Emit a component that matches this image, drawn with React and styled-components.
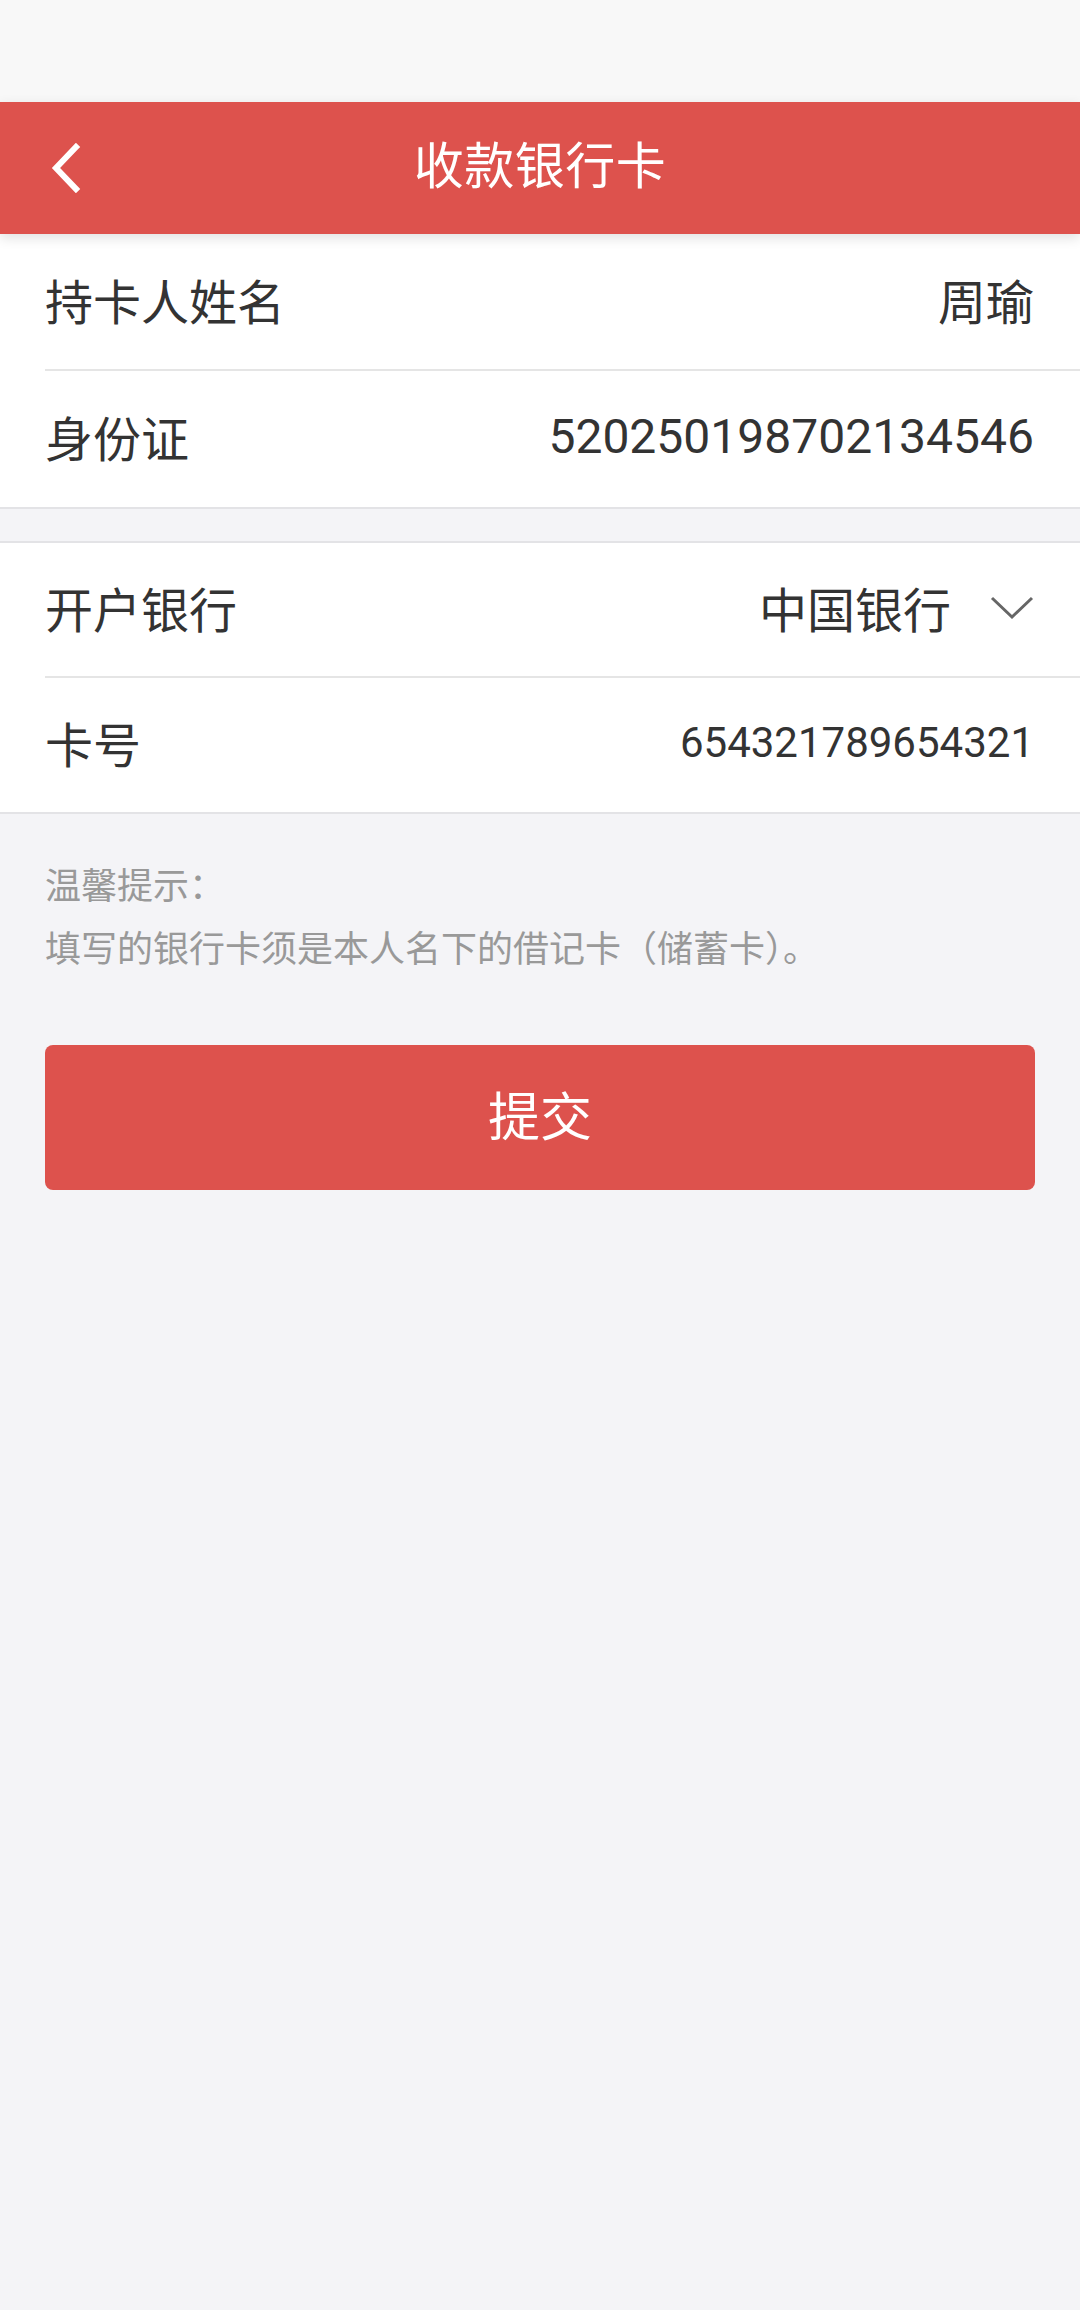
import React from 'react';
import styled, { createGlobalStyle } from 'styled-components';

const GlobalStyle = createGlobalStyle`
  html, body {
    margin: 0;
    padding: 0;
    background: #f4f4f7;
  }
  body {
    font-family: Roboto, "Noto Sans CJK SC", "Noto Sans", sans-serif;
    color: #333;
  }
  * {
    box-sizing: border-box;
  }
`;

const infoRows = [
  { label: '持卡人姓名', value: '周瑜', height: 135 },
  { label: '身份证', value: '520250198702134546', height: 136 },
];

const App = () => {
  return (
    <Page>
      <GlobalStyle />
      <StatusBar />
      <Header>
        <BackButton aria-label="返回">
          <svg width="40" height="50" viewBox="0 0 40 50" fill="none">
            <path d="M29 4 L9 25 L29 46" stroke="#fff" strokeWidth="6" strokeLinecap="square" />
          </svg>
        </BackButton>
        <Title>收款银行卡</Title>
        <span />
      </Header>

      <Card>
        {infoRows.map((r) => (
          <Row key={r.label} $height={r.height}>
            <Label>{r.label}</Label>
            <Value>{r.value}</Value>
          </Row>
        ))}
      </Card>

      <Card $top>
        <Row $height={133}>
          <Label>开户银行</Label>
          <Select>
            <Value>中国银行</Value>
            <svg width="44" height="26" viewBox="0 0 44 26" fill="none">
              <path d="M2 3 L22 22 L42 3" stroke="#666" strokeWidth="3" />
            </svg>
          </Select>
        </Row>
        <Row $height={134}>
          <Label>卡号</Label>
          <Value $small>654321789654321</Value>
        </Row>
      </Card>

      <Tips>
        <p>温馨提示：</p>
        <p>填写的银行卡须是本人名下的借记卡（储蓄卡）。</p>
      </Tips>

      <SubmitButton>提交</SubmitButton>
    </Page>
  );
};

export default App;

const Page = styled.div`
  min-height: 2310px;
  background: #f4f4f7;
`;

const StatusBar = styled.div`
  height: 102px;
  background: #f8f8f8;
`;

const Header = styled.header`
  position: relative;
  z-index: 2;
  height: 132px;
  background: #dd524d;
  display: grid;
  grid-template-columns: 1fr auto 1fr;
  align-items: center;
  box-shadow: 0 4px 12px rgba(0, 0, 0, 0.12);
`;

const BackButton = styled.button`
  justify-self: start;
  margin-left: 47px;
  padding: 0;
  border: 0;
  background: none;
  display: flex;
  align-items: center;
`;

const Title = styled.h1`
  margin: 0 0 12px;
  color: #fff;
  font-size: 50px;
  font-weight: 400;
  letter-spacing: 0.5px;
`;

const Card = styled.section`
  background: #fff;
  border-top: ${(p) => (p.$top ? '2px solid #e3e3e6' : 'none')};
  border-bottom: 2px solid #e3e3e6;
  margin-top: ${(p) => (p.$top ? '32px' : '0')};
`;

const Row = styled.div`
  box-sizing: content-box;
  height: ${(p) => (p.$height || 135) - 6}px;
  margin-left: 45px;
  padding: 0 46px 6px 0;
  display: flex;
  align-items: center;
  justify-content: space-between;
  & + & {
    border-top: 2px solid #e5e5e5;
  }
`;

const Label = styled.span`
  font-size: 48px;
  color: #333;
`;

const Value = styled.span`
  font-size: ${(p) => (p.$small ? '42px' : '48px')};
  color: #333;
`;

const Select = styled.div`
  display: flex;
  align-items: center;
  gap: 39px;
  svg {
    margin-top: 2px;
  }
`;

const Tips = styled.div`
  padding: 42px 45px 0;
  p {
    margin: 0;
    font-size: 36px;
    line-height: 63px;
    color: #999;
  }
`;

const SubmitButton = styled.button`
  display: block;
  width: calc(100% - 90px);
  height: 145px;
  margin: 63px 45px 0;
  padding: 0 0 8px;
  border: 0;
  border-radius: 8px;
  background: #dd524d;
  color: #fff;
  font-family: Roboto, "Noto Sans CJK SC", sans-serif;
  font-size: 52px;
`;
